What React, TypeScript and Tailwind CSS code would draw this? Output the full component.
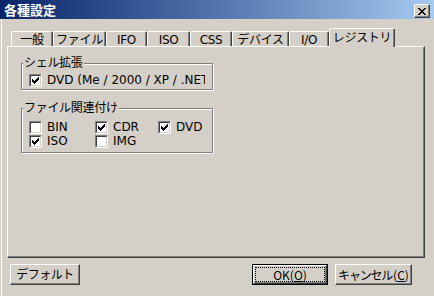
import React from "react";

function Check() {
  const cols = [2, 3, 4, 3, 2, 1, 0];
  return (
    <svg width="7" height="7" viewBox="0 0 7 7" shapeRendering="crispEdges">
      {cols.map((y, i) => (
        <rect key={i} x={i} y={y} width="1" height="3" fill="#000" />
      ))}
    </svg>
  );
}

function CheckBox({ checked, label, w }: { checked: boolean; label: string; w?: string }) {
  return (
    <div className={`flex items-center h-[13px] ${w ?? ""}`}>
      <div className="w-[13px] h-[13px] shrink-0 border border-t-[#808080] border-l-[#808080] border-r-white border-b-white flex">
        <div className="flex-1 border border-t-[#404040] border-l-[#404040] border-r-[#d4d0c8] border-b-[#d4d0c8] bg-white flex items-center justify-center">
          {checked && <Check />}
        </div>
      </div>
      <span className="ml-[5px] text-[12px] leading-[13px] whitespace-nowrap">{label}</span>
    </div>
  );
}

function Group({ title, className, children }: { title: string; className: string; children: React.ReactNode }) {
  return (
    <div
      className={`w-[192px] border border-[#808080] shadow-[inset_1px_1px_0_#fff,1px_1px_0_#fff] flex flex-col ${className}`}
    >
      <div className="self-start -mt-[7px] ml-[1px] px-[1px] bg-[#d4d0c8] text-[12px] leading-[12px] h-[12px] tracking-[-0.3px]">
        {title}
      </div>
      {children}
    </div>
  );
}

function Tab({ label, w }: { label: string; w: string }) {
  return (
    <div
      className={`${w} h-[15px] rounded-t-[2px] border-l border-t border-white border-r border-r-[#404040] shadow-[inset_-1px_0_0_#808080] flex items-center justify-center text-[12px] leading-[12px] pt-[1px] whitespace-nowrap tracking-[-0.3px]`}
    >
      {label}
    </div>
  );
}

function Button({ children, w, extra }: { children: React.ReactNode; w: string; extra?: string }) {
  return (
    <div
      className={`${w} h-[21px] border border-t-white border-l-white border-r-[#404040] border-b-[#404040] shadow-[inset_-1px_-1px_0_#808080] flex items-center justify-center text-[12px] leading-[12px] whitespace-nowrap ${extra ?? ""}`}
    >
      {children}
    </div>
  );
}

export default function App() {
  return (
    <div className="w-[434px] h-[296px] bg-[#d4d0c8] flex flex-col overflow-hidden text-black font-['DejaVu_Sans','Noto_Sans_CJK_JP',sans-serif]">
      {/* Title bar */}
      <div className="h-[19px] shrink-0 bg-linear-to-r from-[#0a246a] to-[#a6caf0] flex items-center justify-between pl-[4px] pr-[4px]">
        <span className="text-white font-bold text-[13px] leading-[13px] font-['Noto_Sans_CJK_JP',sans-serif]">
          各種設定
        </span>
        <div className="w-[16px] h-[14px] mt-[3px] bg-[#d4d0c8] border border-t-white border-l-white border-r-[#404040] border-b-[#404040] shadow-[inset_-1px_-1px_0_#808080] flex items-center justify-center">
          <svg width="8" height="7" viewBox="0 0 8 7" shapeRendering="crispEdges">
            <path
              d="M0 0h2v1H0zM6 0h2v1H6zM1 1h2v1H1zM5 1h2v1H5zM2 2h4v1H2zM3 3h2v1H3zM2 4h4v1H2zM1 5h2v1H1zM5 5h2v1H5zM0 6h2v1H0zM6 6h2v1H6z"
              fill="#000"
            />
          </svg>
        </div>
      </div>

      {/* Body */}
      <div className="flex-1 flex flex-col ml-[1px] border-l border-white pl-[5px] pr-[9px] pt-[9px]">
        {/* Tabs */}
        <div className="h-[18px] flex items-end pl-[4px]">
          <Tab label="一般" w="w-[42px]" />
          <Tab label="ファイル" w="w-[53px]" />
          <Tab label="IFO" w="w-[41px]" />
          <Tab label="ISO" w="w-[43px]" />
          <Tab label="CSS" w="w-[42px]" />
          <Tab label="デバイス" w="w-[57px]" />
          <Tab label="I/O" w="w-[40px]" />
          <div className="relative z-10 w-[66px] h-[19px] -mb-[1px] rounded-t-[2px] bg-[#d4d0c8] border-l border-t border-white border-r border-r-[#404040] shadow-[inset_-1px_0_0_#808080] flex items-center justify-center text-[12px] leading-[12px] whitespace-nowrap pb-[1px] tracking-[-0.3px]">
            レジストリ
          </div>
        </div>

        {/* Panel */}
        <div className="h-[212px] border-l border-t border-white border-r border-b border-r-[#404040] border-b-[#404040] shadow-[inset_-1px_-1px_0_#808080] flex flex-col pl-[13px] pt-[16px]">
          <Group title="シェル拡張" className="h-[27px]">
            <div className="mt-[5px] pl-[7px] w-[183px] overflow-hidden">
              <CheckBox checked label="DVD (Me / 2000 / XP / .NET)" />
            </div>
          </Group>
          <Group title="ファイル関連付け" className="h-[45px] mt-[18px]">
            <div className="mt-[7px] pl-[7px] flex">
              <CheckBox checked={false} label="BIN" w="w-[66px]" />
              <CheckBox checked label="CDR" w="w-[63px]" />
              <CheckBox checked label="DVD" />
            </div>
            <div className="mt-[1px] pl-[7px] flex">
              <CheckBox checked label="ISO" w="w-[66px]" />
              <CheckBox checked={false} label="IMG" />
            </div>
          </Group>
        </div>

        {/* Buttons */}
        <div className="mt-[6px] flex">
          <div className="ml-[3px]">
            <Button w="w-[70px]" extra="tracking-[-0.5px]">
              デフォルト
            </Button>
          </div>
          <div className="ml-auto w-[76px] h-[21px] border border-black flex">
            <div className="flex-1 border border-t-white border-l-white border-r-[#404040] border-b-[#404040] shadow-[inset_-1px_-1px_0_#808080] flex p-[1px]">
              <div className="flex-1 border border-dotted border-black flex items-center justify-center text-[12px] leading-[12px] font-['Noto_Sans_CJK_JP',sans-serif]">
                OK(<span className="underline">O</span>)
              </div>
            </div>
          </div>
          <div className="ml-[7px] mr-[13px]">
            <Button w="w-[77px]" extra="font-['Noto_Sans_CJK_JP',sans-serif]">
              <span className="tracking-[-1.2px]">キャンセル</span>
              <span className="ml-[1px]">(</span>
              <span className="underline">C</span>
              <span>)</span>
            </Button>
          </div>
        </div>
      </div>
    </div>
  );
}
